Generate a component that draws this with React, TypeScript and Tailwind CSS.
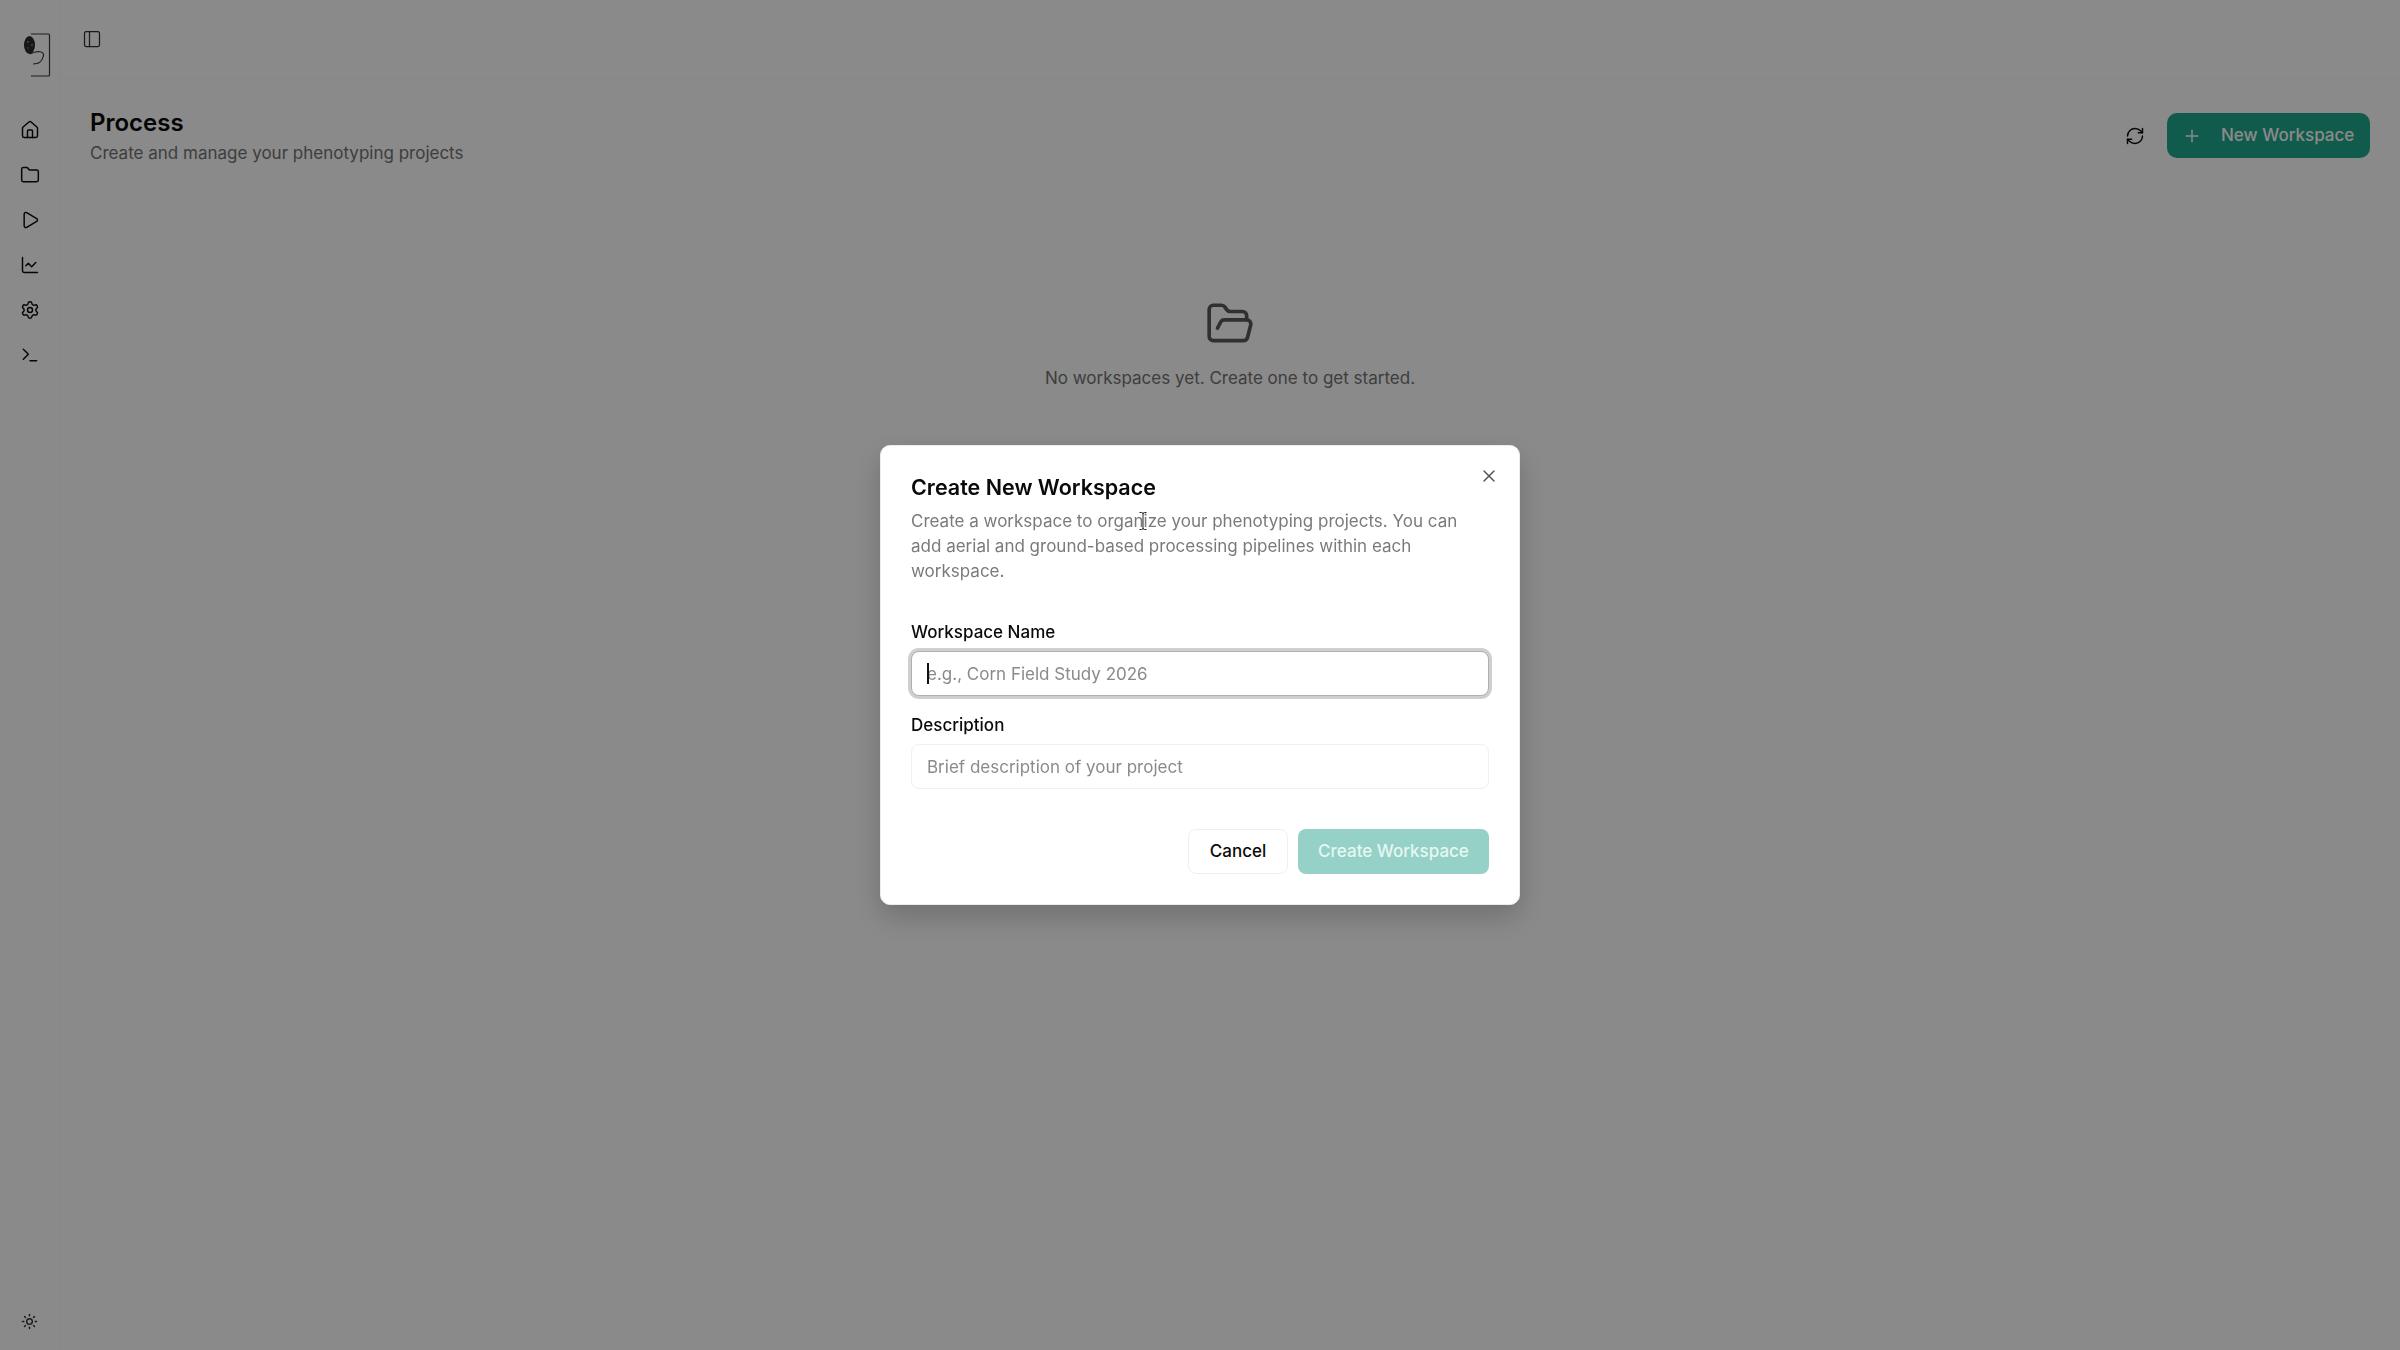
import React from 'react';
import {
  ChartLine,
  Folder,
  FolderOpen,
  House,
  PanelLeft,
  Play,
  Plus,
  RefreshCw,
  Settings,
  Sun,
  Terminal,
  X,
} from 'lucide-react';

const navIcons = [House, Folder, Play, ChartLine, Settings, Terminal];

const Logo: React.FC = () => (
  <svg width="46" height="46" viewBox="0 0 46 46" fill="none" className="block">
    <rect x="0" y="0" width="34" height="43" rx="3" fill="#fff" fillOpacity="0.08" />
    <path d="M24 1H41.5a1 1 0 0 1 1 1V42a1 1 0 0 1-1 1H24" stroke="#3a3a3a" strokeWidth="1.2" />
    <ellipse cx="22.5" cy="12" rx="5.5" ry="9" fill="#2b2b2b" />
    <circle cx="21" cy="9" r="1" fill="#8a8a8a" />
    <circle cx="25" cy="12" r="1" fill="#8a8a8a" />
    <circle cx="21" cy="15" r="0.8" fill="#8a8a8a" />
    <path d="M23 21C30 17 39 18 36 24C35 29 32 31 26 31" stroke="#3a3a3a" strokeWidth="1.2" />
  </svg>
);

const Sidebar: React.FC = () => (
  <aside className="flex h-full w-[60px] shrink-0 flex-col items-center border-r border-black/[0.03] bg-white/[0.04] pt-[33px] pb-[20px] text-[#0a0a0a]">
    <Logo />
    <nav className="mt-[41px] flex flex-col items-center gap-[25px]">
      {navIcons.map((Icon, i) => (
        <Icon key={i} size={20} strokeWidth={1.75} />
      ))}
    </nav>
    <Sun size={17} strokeWidth={2} className="mt-auto text-[#333]" />
  </aside>
);

const Main: React.FC = () => (
  <main className="flex min-w-0 flex-1 flex-col">
    <div className="flex h-[79px] items-center border-b border-black/[0.02] pl-[22px]">
      <PanelLeft size={20} strokeWidth={1.5} className="text-[#333]" />
    </div>
    <div className="flex items-center justify-between px-[30px] pt-[26px]">
      <div>
        <h1 className="text-[24px] leading-[35px] font-semibold text-[#0a0a0a]">Process</h1>
        <p className="text-[17px] leading-[26px] text-[#737373]">Create and manage your phenotyping projects</p>
      </div>
      <div className="flex items-center gap-[10px]">
        <button className="flex h-[45px] w-[45px] items-center justify-center text-[#0a0a0a]">
          <RefreshCw size={20} strokeWidth={1.75} />
        </button>
        <button className="flex h-[45px] w-[203px] items-center gap-[19px] rounded-[10px] bg-[#1fa88b] pl-[15px] text-[17px] font-medium text-white">
          <Plus size={20} strokeWidth={1.75} />
          New Workspace
        </button>
      </div>
    </div>
    <div className="mt-[133px] flex flex-col items-center gap-[17px]">
      <FolderOpen size={50} strokeWidth={1.75} className="text-[#5a5a5a]" />
      <p className="text-[17px] leading-[25px] text-[#737373]">No workspaces yet. Create one to get started.</p>
    </div>
  </main>
);

const Dialog: React.FC = () => (
  <div className="fixed inset-0 flex items-center justify-center bg-black/[0.46]">
    <div className="relative w-[640px] rounded-[10px] border border-[#ececec] bg-white p-[30px] shadow-[0_12px_30px_rgba(0,0,0,0.2)]">
      <button className="absolute top-[20px] right-[20px] text-[#555]">
        <X size={20} strokeWidth={1.75} />
      </button>
      <h2 className="text-[21.5px] leading-[22.5px] font-semibold text-[#0a0a0a]">Create New Workspace</h2>
      <p className="relative mt-[11px] text-[17px] leading-[25px] text-[#7a7a7a]">
        Create a workspace to organize your phenotyping projects. You can add aerial and ground-based processing pipelines within each workspace.
        {/* mouse cursor caught in the recording */}
        <svg width="10" height="20" viewBox="0 0 10 20" fill="none" className="absolute top-[2px] left-[227px]">
          <path d="M1.5 1.5H3.5Q5 1.5 5 3V17Q5 18.5 3.5 18.5H1.5M8.5 1.5H6.5Q5 1.5 5 3M5 17Q5 18.5 6.5 18.5H8.5" stroke="#222" strokeWidth="1" />
        </svg>
      </p>
      <div className="mt-[39px] flex flex-col gap-[10px]">
        <label className="text-[17px] leading-[18px] font-medium text-[#0a0a0a]">Workspace Name</label>
        <div className="relative">
          <input
            placeholder="e.g., Corn Field Study 2026"
            className="h-[45px] w-full rounded-[8px] border border-[#b0b0b0] bg-white px-[15px] text-[17px] shadow-[0_0_0_3px_#cfcfcf] outline-none placeholder:text-[#8a8a8a]"
          />
          <span className="absolute top-[12px] left-[16px] h-[21px] w-[2px] bg-[#111]" />
        </div>
      </div>
      <div className="mt-[20px] flex flex-col gap-[10px]">
        <label className="text-[17px] leading-[18px] font-medium text-[#0a0a0a]">Description</label>
        <input
          placeholder="Brief description of your project"
          className="h-[45px] w-full rounded-[8px] border border-[#f0f0f0] bg-white px-[15px] text-[17px] outline-none placeholder:text-[#8a8a8a]"
        />
      </div>
      <div className="mt-[40px] flex justify-end gap-[10px]">
        <button className="h-[45px] w-[100px] rounded-[8px] border border-[#efefef] bg-white text-[17px] font-medium text-[#0a0a0a]">Cancel</button>
        <button className="h-[45px] w-[191px] rounded-[8px] bg-[#95d1c6] text-[17px] font-medium text-[#e6f7f3]">Create Workspace</button>
      </div>
    </div>
  </div>
);

export default function App() {
  return (
    <div className="flex h-screen overflow-hidden bg-white font-['Inter',sans-serif]">
      <Sidebar />
      <Main />
      <Dialog />
    </div>
  );
}
